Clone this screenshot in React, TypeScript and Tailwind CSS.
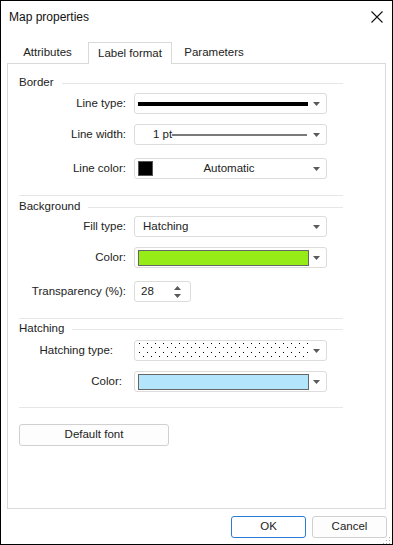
import React from "react";

const font = { fontFamily: '"Liberation Sans", Arial, sans-serif' };

function Arrow() {
  return (
    <svg width="7" height="4" viewBox="0 0 7 4" className="shrink-0">
      <path d="M0 0h7L3.5 4z" fill="#5a5a5a" />
    </svg>
  );
}

function Header({ title }: { title: string }) {
  return (
    <div className="flex items-center h-[14px] gap-[8px]">
      <span className="text-[11.5px] text-[#222] leading-none">{title}</span>
      <div className="flex-1 h-px bg-[#e6e6e6]" />
    </div>
  );
}

function Row({
  label,
  children,
  labelPad = "pr-0",
}: {
  label: string;
  children: React.ReactNode;
  labelPad?: string;
}) {
  return (
    <div className="flex items-center h-[21px]">
      <div className={`w-[107px] text-right text-[11.5px] text-[#222] ${labelPad}`}>
        {label}
      </div>
      <div className="ml-[8px]">{children}</div>
    </div>
  );
}

function Box({ children }: { children: React.ReactNode }) {
  return (
    <div className="w-[193px] h-[21px] border border-[#dcdcdc] rounded-[3px] bg-white flex items-center pl-[2px] pr-[6px]">
      <div className="flex-1 flex items-center h-full min-w-0">{children}</div>
      <Arrow />
    </div>
  );
}

function Dots() {
  return (
    <svg width="171" height="17" className="block">
      <defs>
        <pattern id="hd" width="8" height="9" patternUnits="userSpaceOnUse">
          <rect x="1" y="1" width="1" height="1" fill="#000" />
          <rect x="5" y="5" width="1" height="1" fill="#000" />
        </pattern>
      </defs>
      <rect width="171" height="17" fill="url(#hd)" />
    </svg>
  );
}

export default function App() {
  return (
    <div
      className="w-[393px] h-[545px] border border-black bg-white flex flex-col"
      style={font}
    >
      <div className="h-[31px] flex items-center justify-between pl-[8px] pr-[9px]">
        <span className="text-[12px] text-[#111]">Map properties</span>
        <svg width="12" height="12" viewBox="0 0 12 12">
          <path d="M0.5 0.5L11.5 11.5M11.5 0.5L0.5 11.5" stroke="#111" strokeWidth="1.1" />
        </svg>
      </div>

      <div className="mt-[10px] pl-[6px] flex h-[22px] relative z-10">
        <div className="w-[81px] flex items-center justify-center text-[11.5px] text-[#222]">
          Attributes
        </div>
        <div className="w-[84px] h-[22px] border border-b-0 border-[#d9d9d9] bg-white flex items-center justify-center text-[11.5px] text-[#222]">
          Label format
        </div>
        <div className="w-[84px] flex items-center justify-center text-[11.5px] text-[#222]">
          Parameters
        </div>
      </div>

      <div className="mx-[6px] -mt-px h-[446px] border border-[#d9d9d9] pl-[11px]">
        <div className="w-[324px] flex flex-col">
          <div className="mt-[12px]">
            <Header title="Border" />
          </div>
          <div className="mt-[3px]">
            <Row label="Line type:">
              <Box>
                <div className="ml-[1px] w-[170px] h-[4px] bg-black" />
              </Box>
            </Row>
          </div>
          <div className="mt-[10px]">
            <Row label="Line width:">
              <Box>
                <span className="ml-[16px] text-[11.5px] text-[#222]">1 pt</span>
                <div className="w-[135px] h-[2px] bg-[#7a7a7a]" />
              </Box>
            </Row>
          </div>
          <div className="mt-[13px]">
            <Row label="Line color:">
              <Box>
                <div className="ml-[1px] w-[15px] h-[15px] bg-black border border-[#555]" />
                <span className="flex-1 text-center text-[11.5px] text-[#222] pr-[8px]">
                  Automatic
                </span>
              </Box>
            </Row>
          </div>
          <div className="mt-[16px] h-px bg-[#e6e6e6]" />

          <div className="mt-[4px]">
            <Header title="Background" />
          </div>
          <div className="mt-[2px]">
            <Row label="Fill type:">
              <Box>
                <span className="ml-[6px] text-[11.5px] text-[#222]">Hatching</span>
              </Box>
            </Row>
          </div>
          <div className="mt-[10px]">
            <Row label="Color:">
              <Box>
                <div className="ml-[1px] w-[171px] h-[16px] shrink-0 bg-[#96ec16] border border-[#666] mr-[3px]" />
              </Box>
            </Row>
          </div>
          <div className="mt-[13px]">
            <Row label="Transparency (%):">
              <div className="w-[57px] h-[21px] border border-[#dcdcdc] rounded-[3px] flex items-center pl-[6px] pr-[9px]">
                <span className="flex-1 text-[11.5px] text-[#222]">28</span>
                <div className="flex flex-col gap-[4px]">
                  <svg width="7" height="4" viewBox="0 0 7 4">
                    <path d="M0 4h7L3.5 0z" fill="#5a5a5a" />
                  </svg>
                  <svg width="7" height="4" viewBox="0 0 7 4">
                    <path d="M0 0h7L3.5 4z" fill="#5a5a5a" />
                  </svg>
                </div>
              </div>
            </Row>
          </div>
          <div className="mt-[16px] h-px bg-[#e6e6e6]" />

          <div className="mt-[3px]">
            <Header title="Hatching" />
          </div>
          <div className="mt-[4px]">
            <Row label="Hatching type:" labelPad="pr-[13px]">
              <Box>
                <div className="ml-[1px] mr-[3px] shrink-0">
                  <Dots />
                </div>
              </Box>
            </Row>
          </div>
          <div className="mt-[10px]">
            <Row label="Color:" labelPad="pr-[4px]">
              <Box>
                <div className="ml-[1px] w-[171px] h-[16px] shrink-0 bg-[#b3e6fc] border border-[#666] mr-[3px]" />
              </Box>
            </Row>
          </div>
          <div className="mt-[15px] h-px bg-[#e6e6e6]" />

          <button className="mt-[16px] w-[150px] h-[22px] border border-[#d0d0d0] rounded-[3px] bg-[#fdfdfd] text-[11.5px] text-[#222]">
            Default font
          </button>
        </div>
      </div>

      <div className="flex justify-end gap-[6px] pr-[5px] mt-[7px] relative">
        <button className="w-[75px] h-[22px] border border-[#2a7bd4] rounded-[3px] bg-white text-[11.5px] text-[#222]">
          OK
        </button>
        <button className="w-[75px] h-[22px] border border-[#d0d0d0] rounded-[3px] bg-[#fdfdfd] text-[11.5px] text-[#222]">
          Cancel
        </button>
        <svg width="8" height="8" className="absolute right-[1px] top-[21px]">
          <rect x="6" y="0" width="1" height="1" fill="#aaa" />
          <rect x="3" y="3" width="1" height="1" fill="#aaa" />
          <rect x="6" y="3" width="1" height="1" fill="#aaa" />
          <rect x="0" y="6" width="1" height="1" fill="#aaa" />
          <rect x="3" y="6" width="1" height="1" fill="#aaa" />
          <rect x="6" y="6" width="1" height="1" fill="#aaa" />
        </svg>
      </div>
    </div>
  );
}
